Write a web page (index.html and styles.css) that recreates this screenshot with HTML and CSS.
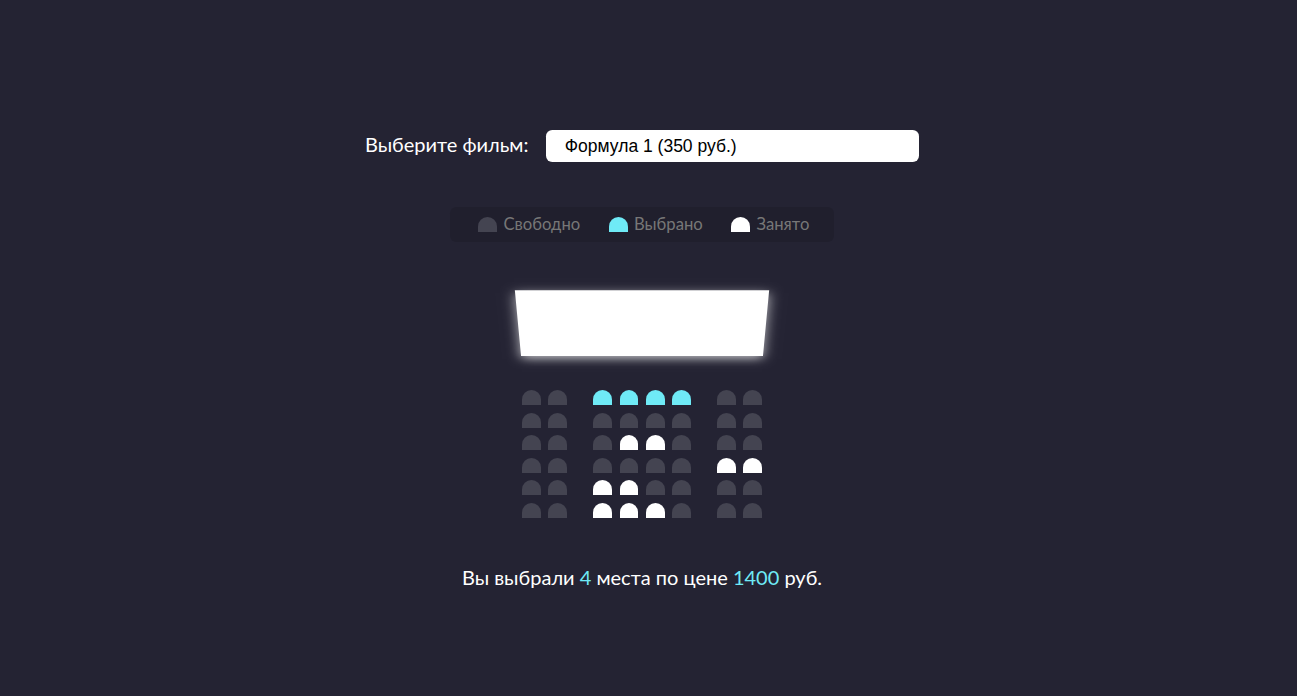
FILE: index.html
```html
<!DOCTYPE html>
<html lang="ru">
<head>
<meta charset="utf-8">
<title>Бронирование мест</title>
<link rel="stylesheet" href="styles.css">
</head>
<body>
  <div class="movie-container">
    <label for="movie">Выберите фильм:</label>
    <select id="movie" class="movie-select">
      <option value="350">Формула 1 (350 руб.)</option>
      <option value="300">Мстители (300 руб.)</option>
      <option value="250">Джокер (250 руб.)</option>
    </select>
  </div>

  <ul class="showcase">
    <li><div class="seat"></div><small>Свободно</small></li>
    <li><div class="seat selected"></div><small>Выбрано</small></li>
    <li><div class="seat occupied"></div><small>Занято</small></li>
  </ul>

  <div class="container">
    <div class="screen"></div>
    <div class="row">
      <div class="seat"></div><div class="seat"></div><div class="seat selected"></div><div class="seat selected"></div><div class="seat selected"></div><div class="seat selected"></div><div class="seat"></div><div class="seat"></div>
    </div>
    <div class="row">
      <div class="seat"></div><div class="seat"></div><div class="seat"></div><div class="seat"></div><div class="seat"></div><div class="seat"></div><div class="seat"></div><div class="seat"></div>
    </div>
    <div class="row">
      <div class="seat"></div><div class="seat"></div><div class="seat"></div><div class="seat occupied"></div><div class="seat occupied"></div><div class="seat"></div><div class="seat"></div><div class="seat"></div>
    </div>
    <div class="row">
      <div class="seat"></div><div class="seat"></div><div class="seat"></div><div class="seat"></div><div class="seat"></div><div class="seat"></div><div class="seat occupied"></div><div class="seat occupied"></div>
    </div>
    <div class="row">
      <div class="seat"></div><div class="seat"></div><div class="seat occupied"></div><div class="seat occupied"></div><div class="seat"></div><div class="seat"></div><div class="seat"></div><div class="seat"></div>
    </div>
    <div class="row">
      <div class="seat"></div><div class="seat"></div><div class="seat occupied"></div><div class="seat occupied"></div><div class="seat occupied"></div><div class="seat"></div><div class="seat"></div><div class="seat"></div>
    </div>
  </div>

  <p class="text">Вы выбрали <span>4</span> места по цене <span>1400</span> руб.</p>
</body>
</html>
```
FILE: styles.css
```css
* {
  box-sizing: border-box;
}

body {
  background-color: #242333;
  color: #fff;
  display: flex;
  flex-direction: column;
  align-items: center;
  justify-content: center;
  height: 100vh;
  margin: 0;
  padding: 4px 13px 0 0;
  font-family: Lato, "Noto Sans", sans-serif;
  font-size: 20px;
}

.movie-container {
  margin: 25px 0;
}

.movie-select {
  background-color: #fff;
  border: 0;
  border-radius: 6.25px;
  font-family: "Liberation Sans", Arial, sans-serif;
  font-size: 17.5px;
  color: #000;
  margin-left: 12.5px;
  padding: 6px 18.75px;
  width: 373px;
  -webkit-appearance: none;
  appearance: none;
}

.showcase {
  background: rgba(0, 0, 0, 0.1);
  padding: 6.25px 12.5px;
  border-radius: 6.25px;
  color: #777;
  list-style-type: none;
  display: flex;
  justify-content: space-between;
  margin: 20px 0;
}

.showcase li {
  display: flex;
  align-items: center;
  justify-content: center;
  margin: 0 12.5px;
}

.showcase small {
  margin-left: 2.5px;
}

.container {
  perspective: 1250px;
  margin-bottom: 37.5px;
}

.screen {
  background-color: #fff;
  height: 87.5px;
  width: 100%;
  margin: 18.75px 0;
  transform: rotateX(-45deg);
  box-shadow: 0 3.75px 12.5px rgba(255, 255, 255, 0.7);
}

.row {
  display: flex;
}

.seat {
  background-color: #444451;
  height: 15px;
  width: 18.75px;
  margin: 3.75px;
  border-top-left-radius: 12.5px;
  border-top-right-radius: 12.5px;
}

.seat.selected {
  background-color: #6feaf6;
}

.seat.occupied {
  background-color: #fff;
}

.row .seat:nth-child(2) {
  margin-right: 22.5px;
}

.row .seat:nth-last-child(2) {
  margin-left: 22.5px;
}

.text {
  margin: 6.25px 0;
}

.text span {
  color: #6feaf6;
}
```
